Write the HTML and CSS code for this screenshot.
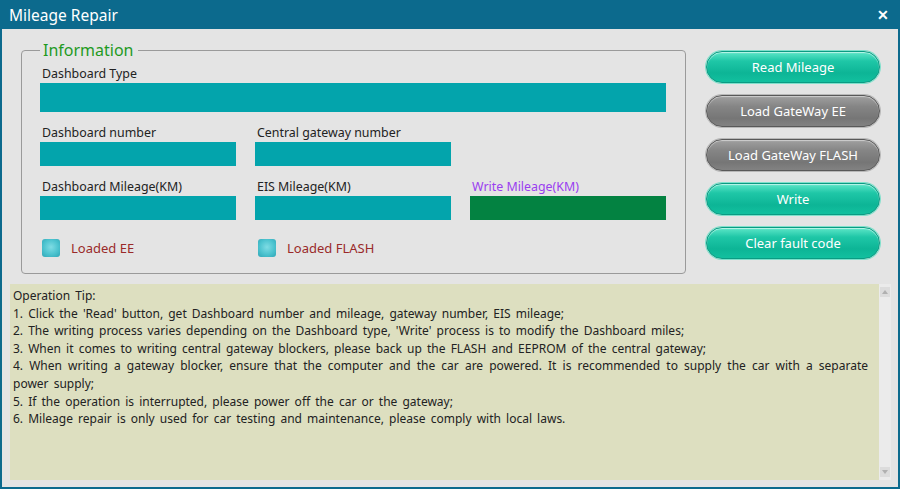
FILE: index.html
```html
<!DOCTYPE html>
<html>
<head>
<meta charset="utf-8">
<link rel="stylesheet" href="styles.css">
</head>
<body>
<div class="window">
  <div class="titlebar">
    <span class="title">Mileage Repair</span>
    <span class="close">&#x2715;</span>
  </div>
  <div class="top">
    <fieldset class="group">
      <legend>Information</legend>
      <div class="grid">
        <div class="field span3">
          <div class="label">Dashboard Type</div>
          <div class="input tall"></div>
        </div>
        <div class="field">
          <div class="label">Dashboard number</div>
          <div class="input"></div>
        </div>
        <div class="field">
          <div class="label">Central gateway number</div>
          <div class="input"></div>
        </div>
        <div class="field"></div>
        <div class="field">
          <div class="label">Dashboard Mileage(KM)</div>
          <div class="input"></div>
        </div>
        <div class="field">
          <div class="label">EIS Mileage(KM)</div>
          <div class="input"></div>
        </div>
        <div class="field">
          <div class="label purple">Write Mileage(KM)</div>
          <div class="input green"></div>
        </div>
        <div class="check"><span class="box"></span><span class="clabel">Loaded EE</span></div>
        <div class="check second"><span class="box"></span><span class="clabel">Loaded FLASH</span></div>
      </div>
    </fieldset>
    <div class="buttons">
      <div class="btn teal">Read Mileage</div>
      <div class="btn gray">Load GateWay EE</div>
      <div class="btn gray">Load GateWay FLASH</div>
      <div class="btn teal">Write</div>
      <div class="btn teal">Clear fault code</div>
    </div>
  </div>
  <div class="tips">
    <div class="text">
      <p>Operation Tip:</p>
      <p>1. Click the 'Read' button, get Dashboard number and mileage, gateway number, EIS mileage;</p>
      <p>2. The writing process varies depending on the Dashboard type, 'Write' process is to modify the Dashboard miles;</p>
      <p>3. When it comes to writing central gateway blockers, please back up the FLASH and EEPROM of the central gateway;</p>
      <p>4. When writing a gateway blocker, ensure that the computer and the car are powered. It is recommended to supply the car with a separate power supply;</p>
      <p>5. If the operation is interrupted, please power off the car or the gateway;</p>
      <p>6. Mileage repair is only used for car testing and maintenance, please comply with local laws.</p>
    </div>
    <div class="scroll">
      <div class="arrow up"></div>
      <div class="arrow down"></div>
    </div>
  </div>
</div>
</body>
</html>
```

FILE: styles.css
```css
* { box-sizing: border-box; }
html, body { margin: 0; padding: 0; }
body {
  width: 900px;
  height: 489px;
  overflow: hidden;
  font-family: "Noto Sans", "Liberation Sans", sans-serif;
  background: #e4e4e4;
}
.window {
  width: 900px;
  height: 489px;
  border: 2px solid #0c6a8d;
  border-top: none;
  background: #e4e4e4;
  display: flex;
  flex-direction: column;
}
.titlebar {
  height: 29px;
  margin: 0 -2px;
  background: #0c6a8d;
  color: #fff;
  display: flex;
  align-items: center;
  justify-content: space-between;
  padding: 0 11px 0 9px;
}
.title { font-size: 15.5px; }
.close { font-size: 14px; font-weight: bold; }
.top {
  display: flex;
  padding: 11px 0 0 19px;
}
.group {
  margin: 0;
  width: 665px;
  height: 234px;
  border: 1px solid #9a9a9a;
  border-radius: 4px;
  padding: 0 18px 0 18px;
}
.group legend {
  font-size: 16px;
  line-height: 20px;
  color: #1f9a1f;
  padding: 0 4px 0 3px;
}
.grid {
  display: grid;
  grid-template-columns: 196px 196px 196px;
  column-gap: 19px;
  row-gap: 11px;
  padding-top: 4px;
}
.span3 { grid-column: 1 / 4; }
.label {
  font-size: 12.4px;
  line-height: 16px;
  color: #222;
  padding-top: 2px;
  margin: 0 0 1px 2px;
}
.purple { color: #9a3df0; }
.input {
  height: 24px;
  background: #03a4ac;
}
.input.tall { height: 29px; }
.input.green { background: #038241; }
.check {
  display: flex;
  align-items: center;
  margin-top: 7px;
  padding-left: 2px;
}
.check.second { padding-left: 3px; }
.box {
  width: 18px;
  height: 18px;
  border-radius: 3px;
  background: radial-gradient(circle at 50% 45%, #7fdce4 0%, #4cc3cf 55%, #2fa6b6 100%);
}
.clabel {
  margin-left: 11px;
  padding-top: 1px;
  font-size: 13px;
  color: #9a2a2a;
}
.buttons {
  margin: 11px 0 0 20px;
  display: flex;
  flex-direction: column;
  gap: 12px;
}
.btn {
  width: 174px;
  height: 32px;
  border-radius: 16px;
  color: #fff;
  font-size: 13px;
  display: flex;
  align-items: center;
  justify-content: center;
}
.btn.teal {
  background: linear-gradient(#5de6c8 0%, #1fc7a7 30%, #0db596 70%, #12c09f 100%);
  border: 1px solid #0b9b83;
  box-shadow: 0 0 0 1px #7fe0cb, inset 0 1px 1px rgba(255,255,255,0.6);
}
.btn.gray {
  background: linear-gradient(#a0a0a0 0%, #858585 35%, #767676 75%, #828282 100%);
  border: 1px solid #595959;
  box-shadow: 0 0 0 1px #b8b8b8, inset 0 1px 1px rgba(255,255,255,0.5);
}
.tips {
  margin: 10px 7px 0 8px;
  height: 196px;
  display: flex;
  background: #dddfc0;
}
.text {
  flex: 1;
  padding: 3px 11px 0 3px;
  font-size: 12px;
  line-height: 17.6px;
  color: #222;
  text-align: justify;
  word-spacing: 2px;
}
.text p { margin: 0; }
.scroll {
  width: 12px;
  background: #ebebeb;
  display: flex;
  flex-direction: column;
  justify-content: space-between;
  padding: 3px 1px;
}
.arrow {
  width: 10px;
  height: 10px;
  background: #dcdcdc;
  position: relative;
}
.arrow::after {
  content: "";
  position: absolute;
  left: 2px;
  border-left: 3px solid transparent;
  border-right: 3px solid transparent;
}
.arrow.up::after { top: 3px; border-bottom: 4px solid #b0b0b0; }
.arrow.down::after { top: 3px; border-top: 4px solid #b0b0b0; }
```
